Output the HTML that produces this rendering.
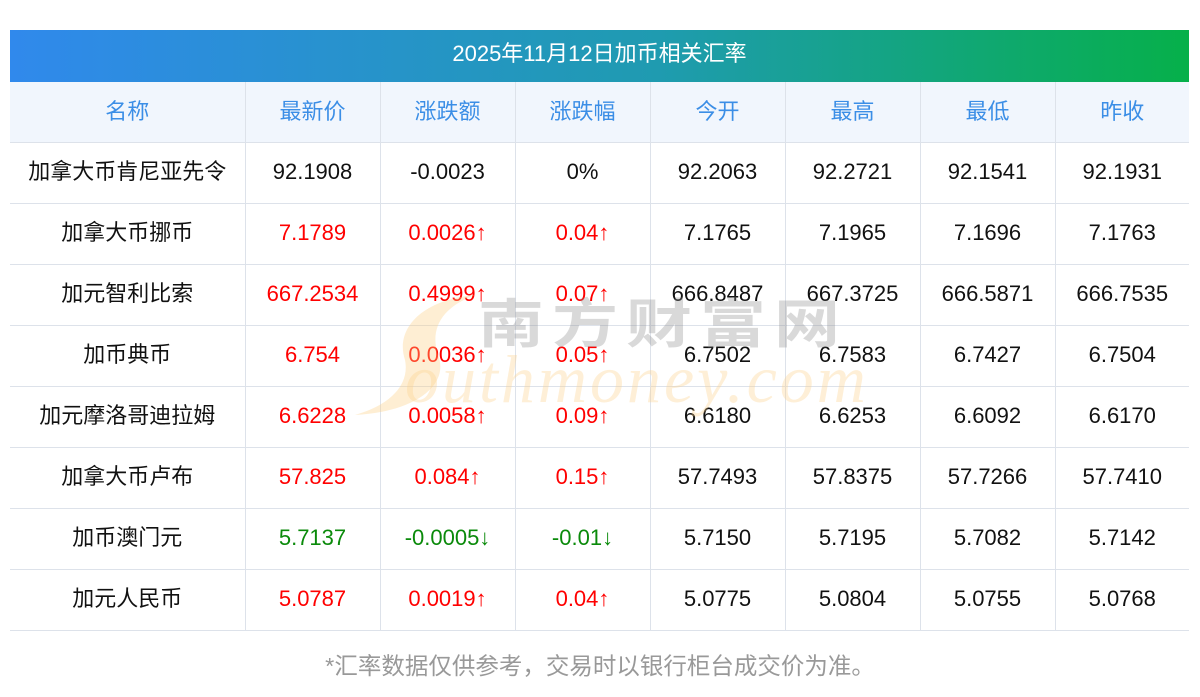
<!DOCTYPE html>
<html><head><meta charset="utf-8"><style>
*{margin:0;padding:0;box-sizing:border-box}
body{width:1200px;height:697px;background:#fff;font-family:"Liberation Sans","Noto Sans CJK SC",sans-serif;position:relative;overflow:hidden}
.title{position:absolute;left:10px;top:30px;width:1179px;height:52px;background:linear-gradient(90deg,#3089ec,#1f9bb0 55%,#06b04a);color:#fff;font-size:22px;text-align:center;line-height:48px}
table{position:absolute;left:10px;top:82px;width:1179px;border-collapse:collapse;table-layout:fixed}
td{height:61px;padding:0 0 2px 0;text-align:center;font-size:22px;color:#111;border-bottom:1px solid #dde2ea;border-left:1px solid #dde2ea;line-height:22px}
td:first-child{border-left:none}
tr.h td{background:#f1f6fd;color:#3b8ee6;font-size:22px;height:60px;padding-bottom:0}
.r{color:#f00}.g{color:#0a8a0a}
.foot{position:absolute;left:0;width:1200px;top:647px;text-align:center;color:#999;font-size:23.5px}
.wm1{position:absolute;left:478px;top:292px;font-size:66px;line-height:80px;color:rgba(140,140,140,.33);letter-spacing:8px;font-weight:bold;z-index:2;transform:scaleY(0.8);transform-origin:top left}
.wm2{position:absolute;left:405px;top:340px;font-size:68px;color:rgba(253,210,140,.35);font-style:italic;font-family:"Liberation Serif",serif;z-index:2;letter-spacing:3px}
svg.s{position:absolute;left:350px;top:290px;z-index:1}
</style></head><body>
<div class="title">2025年11月12日加币相关汇率</div>
<table>
<colgroup><col style="width:235px"><col style="width:135px"><col style="width:135px"><col style="width:135px"><col style="width:135px"><col style="width:135px"><col style="width:135px"><col style="width:134px"></colgroup>
<tr class="h"><td>名称</td><td>最新价</td><td>涨跌额</td><td>涨跌幅</td><td>今开</td><td>最高</td><td>最低</td><td>昨收</td></tr>
<tr><td>加拿大币肯尼亚先令</td><td>92.1908</td><td>-0.0023</td><td>0%</td><td>92.2063</td><td>92.2721</td><td>92.1541</td><td>92.1931</td></tr>
<tr><td>加拿大币挪币</td><td class="r">7.1789</td><td class="r">0.0026↑</td><td class="r">0.04↑</td><td>7.1765</td><td>7.1965</td><td>7.1696</td><td>7.1763</td></tr>
<tr><td>加元智利比索</td><td class="r">667.2534</td><td class="r">0.4999↑</td><td class="r">0.07↑</td><td>666.8487</td><td>667.3725</td><td>666.5871</td><td>666.7535</td></tr>
<tr><td>加币典币</td><td class="r">6.754</td><td class="r">0.0036↑</td><td class="r">0.05↑</td><td>6.7502</td><td>6.7583</td><td>6.7427</td><td>6.7504</td></tr>
<tr><td>加元摩洛哥迪拉姆</td><td class="r">6.6228</td><td class="r">0.0058↑</td><td class="r">0.09↑</td><td>6.6180</td><td>6.6253</td><td>6.6092</td><td>6.6170</td></tr>
<tr><td>加拿大币卢布</td><td class="r">57.825</td><td class="r">0.084↑</td><td class="r">0.15↑</td><td>57.7493</td><td>57.8375</td><td>57.7266</td><td>57.7410</td></tr>
<tr><td>加币澳门元</td><td class="g">5.7137</td><td class="g">-0.0005↓</td><td class="g">-0.01↓</td><td>5.7150</td><td>5.7195</td><td>5.7082</td><td>5.7142</td></tr>
<tr><td>加元人民币</td><td class="r">5.0787</td><td class="r">0.0019↑</td><td class="r">0.04↑</td><td>5.0775</td><td>5.0804</td><td>5.0755</td><td>5.0768</td></tr>
</table>
<svg class="s" width="130" height="130" viewBox="0 0 130 130"><path d="M125 5 C70 10 45 40 55 70 C60 95 40 115 5 125 C65 122 100 95 88 65 C80 40 90 18 125 5Z" fill="rgba(253,205,130,.35)"/></svg>
<div class="wm1">南方财富网</div>
<div class="wm2">outhmoney.com</div>
<div class="foot">*汇率数据仅供参考，交易时以银行柜台成交价为准。</div>
</body></html>
